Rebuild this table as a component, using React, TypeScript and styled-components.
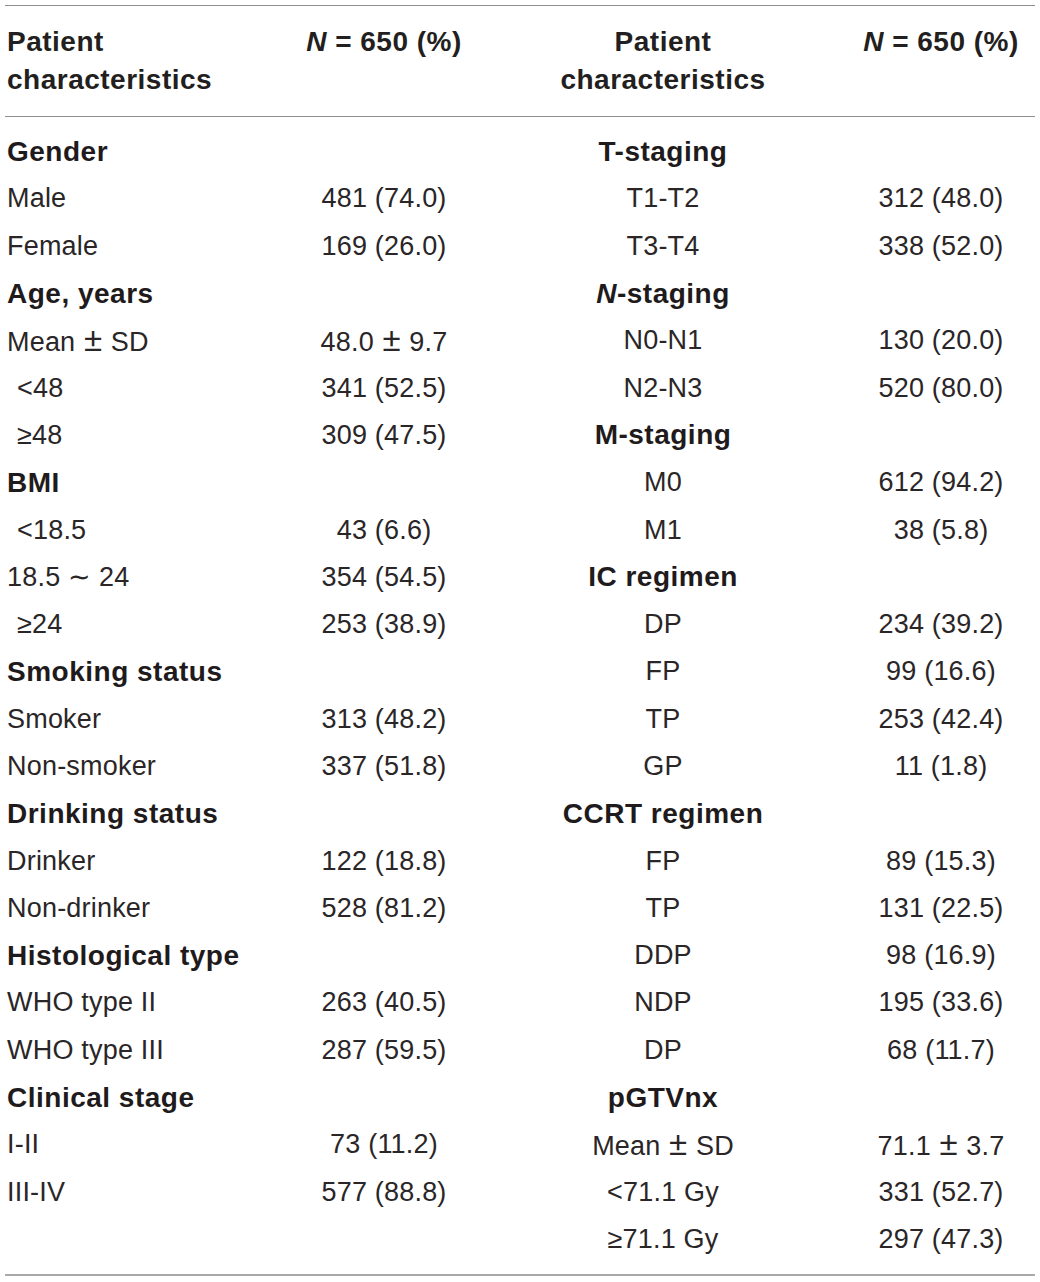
import React from "react";
import styled, { createGlobalStyle } from "styled-components";

const GlobalStyle = createGlobalStyle`
  html, body { margin: 0; padding: 0; background: #ffffff; }
  body { font-family: "Liberation Sans", Arial, Helvetica, sans-serif; color: #231f20; }
`;

const Page = styled.div`
  width: 1040px;
  height: 1282px;
  padding: 5px 5px 0 5px;
  box-sizing: border-box;
  background: #fff;
`;

const Table = styled.div`
  width: 1030px;
  display: grid;
  grid-template-columns: 284px 190px 368px 188px;
  border-top: 1.5px solid #8f8f8f;
  border-bottom: 2px solid #a8a8a8;
`;

const HeadRow = styled.div`
  display: contents;
`;

const HeadCell = styled.div<{ $align: "left" | "center" }>`
  padding: 17px 0 17px ${(p) => (p.$align === "left" ? "2px" : "0")};
  text-align: ${(p) => p.$align};
  font-weight: 700;
  font-size: 28px;
  letter-spacing: 0.5px;
  line-height: 38px;
  border-bottom: 1.5px solid #8f8f8f;
  white-space: nowrap;
`;

const Body = styled.div`
  grid-column: 1 / -1;
  display: grid;
  grid-template-columns: 284px 190px 368px 188px;
  grid-auto-rows: 47.3px;
  padding: 11px 0;
`;

const Cell = styled.div<{ $align: "left" | "center"; $bold?: boolean; $indent?: boolean }>`
  display: flex;
  align-items: center;
  justify-content: ${(p) => (p.$align === "left" ? "flex-start" : "center")};
  padding-left: ${(p) => (p.$align === "left" ? (p.$indent ? "12px" : "2px") : "0")};
  font-size: ${(p) => (p.$bold ? "28px" : "27px")};
  letter-spacing: ${(p) => (p.$bold ? "0.5px" : "0.2px")};
  font-weight: ${(p) => (p.$bold ? 700 : 400)};
  color: ${(p) => (p.$bold ? "#1f1b1c" : "#2a2627")};
  white-space: pre;
`;

const Pm = styled.span`
  display: inline-block;
  width: 20px;
  text-align: center;
  font-size: 33px;
  line-height: 1;
`;

type Item = { label: React.ReactNode; value?: React.ReactNode; bold?: boolean; indent?: boolean };

const pm = (a: string, b: string) => (
  <span>
    {a + " "}
    <Pm>{"\u00b1"}</Pm>
    {" " + b}
  </span>
);

const left: Item[] = [
  { label: "Gender", bold: true },
  { label: "Male", value: "481 (74.0)" },
  { label: "Female", value: "169 (26.0)" },
  { label: "Age, years", bold: true },
  { label: pm("Mean", "SD"), value: pm("48.0", "9.7") },
  { label: "<48", value: "341 (52.5)", indent: true },
  { label: "\u226548", value: "309 (47.5)", indent: true },
  { label: "BMI", bold: true },
  { label: "<18.5", value: "43 (6.6)", indent: true },
  { label: "18.5 \u223c 24", value: "354 (54.5)" },
  { label: "\u226524", value: "253 (38.9)", indent: true },
  { label: "Smoking status", bold: true },
  { label: "Smoker", value: "313 (48.2)" },
  { label: "Non-smoker", value: "337 (51.8)" },
  { label: "Drinking status", bold: true },
  { label: "Drinker", value: "122 (18.8)" },
  { label: "Non-drinker", value: "528 (81.2)" },
  { label: "Histological type", bold: true },
  { label: "WHO type II", value: "263 (40.5)" },
  { label: "WHO type III", value: "287 (59.5)" },
  { label: "Clinical stage", bold: true },
  { label: "I-II", value: "73 (11.2)" },
  { label: "III-IV", value: "577 (88.8)" },
  { label: "" },
];

const right: Item[] = [
  { label: "T-staging", bold: true },
  { label: "T1-T2", value: "312 (48.0)" },
  { label: "T3-T4", value: "338 (52.0)" },
  { label: <><i>N</i>-staging</>, bold: true },
  { label: "N0-N1", value: "130 (20.0)" },
  { label: "N2-N3", value: "520 (80.0)" },
  { label: "M-staging", bold: true },
  { label: "M0", value: "612 (94.2)" },
  { label: "M1", value: "38 (5.8)" },
  { label: "IC regimen", bold: true },
  { label: "DP", value: "234 (39.2)" },
  { label: "FP", value: "99 (16.6)" },
  { label: "TP", value: "253 (42.4)" },
  { label: "GP", value: "11 (1.8)" },
  { label: "CCRT regimen", bold: true },
  { label: "FP", value: "89 (15.3)" },
  { label: "TP", value: "131 (22.5)" },
  { label: "DDP", value: "98 (16.9)" },
  { label: "NDP", value: "195 (33.6)" },
  { label: "DP", value: "68 (11.7)" },
  { label: "pGTVnx", bold: true },
  { label: pm("Mean", "SD"), value: pm("71.1", "3.7") },
  { label: "<71.1 Gy", value: "331 (52.7)" },
  { label: "\u226571.1 Gy", value: "297 (47.3)" },
];

const NHeader = () => (
  <>
    <i>N</i> = 650 (%)
  </>
);

export default function App() {
  return (
    <Page>
      <GlobalStyle />
      <Table>
        <HeadRow>
          <HeadCell $align="left">
            Patient
            <br />
            characteristics
          </HeadCell>
          <HeadCell $align="center">
            <NHeader />
          </HeadCell>
          <HeadCell $align="center">
            Patient
            <br />
            characteristics
          </HeadCell>
          <HeadCell $align="center">
            <NHeader />
          </HeadCell>
        </HeadRow>
        <Body>
          {left.map((l, i) => {
            const r = right[i];
            return (
              <React.Fragment key={i}>
                <Cell $align="left" $bold={l.bold} $indent={l.indent}>
                  {l.label}
                </Cell>
                <Cell $align="center">{l.value ?? ""}</Cell>
                <Cell $align="center" $bold={r.bold}>
                  {r.label}
                </Cell>
                <Cell $align="center">{r.value ?? ""}</Cell>
              </React.Fragment>
            );
          })}
        </Body>
      </Table>
    </Page>
  );
}
